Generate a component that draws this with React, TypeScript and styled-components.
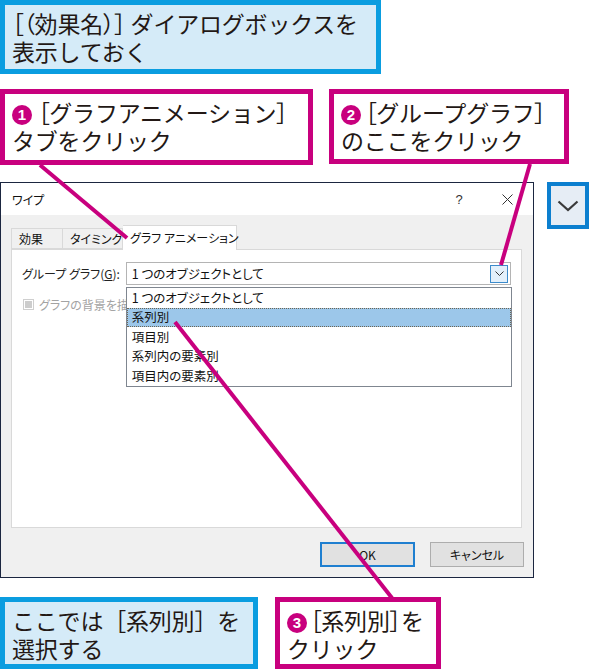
import React from "react";
import styled, { createGlobalStyle } from "styled-components";

const MAGENTA = "#c8007e";
const BLUE = "#0a9de0";

const GlobalStyle = createGlobalStyle`
  html, body {
    margin: 0;
    padding: 0;
    background: #fff;
  }
  body {
    font-family: "Noto Sans CJK JP", "Noto Sans", sans-serif;
    color: #231815;
  }
`;

const Page = styled.div`
  position: relative;
  width: 600px;
  height: 670px;
  overflow: hidden;
  display: flex;
  flex-direction: column;
`;

const Row = styled.div<{ $gap: number; $top: number }>`
  display: flex;
  align-items: flex-start;
  gap: ${(p) => p.$gap}px;
  margin-top: ${(p) => p.$top}px;
`;

const Note = styled.div<{ $w: number; $h: number }>`
  box-sizing: border-box;
  width: ${(p) => p.$w}px;
  height: ${(p) => p.$h}px;
  border: 5px solid ${BLUE};
  background: #d5ebf8;
  padding: 4px 0 0 7px;
  font-size: 23px;
  line-height: 28px;
  white-space: nowrap;
  letter-spacing: -0.2px;
`;

const Callout = styled(Note)`
  border-color: ${MAGENTA};
  background: #fff;
`;

// proportional brackets, as in the printed captions
const Bk = styled.span`
  font-feature-settings: "palt";
`;

const Num = styled.span<{ $gap?: number }>`
  display: inline-flex;
  align-items: center;
  justify-content: center;
  width: 20px;
  height: 20px;
  border-radius: 50%;
  background: ${MAGENTA};
  color: #fff;
  font-family: "Liberation Sans", Arial, sans-serif;
  font-size: 15px;
  font-weight: 700;
  letter-spacing: 0;
  vertical-align: 2px;
  margin-right: ${(p) => p.$gap ?? 6}px;
`;

/* dialog */
const Dialog = styled.div`
  position: relative;
  box-sizing: border-box;
  width: 534px;
  height: 396px;
  border: 1px solid #1b2640;
  background: #f0f0f0;
  display: flex;
  flex-direction: column;
  font-family: "Noto Sans CJK JP", sans-serif;
  font-size: 12px;
  color: #111;
  font-feature-settings: "palt";
`;

const TitleBar = styled.div`
  height: 32px;
  background: #fff;
  display: flex;
  align-items: center;
  padding: 0 2px 0 11px;
`;

const Title = styled.div`
  flex: 1;
`;

const TitleButton = styled.div`
  width: 48px;
  height: 32px;
  display: flex;
  align-items: center;
  justify-content: center;
  color: #333;
  font-family: "Liberation Sans", sans-serif;
  font-size: 13px;
`;

const Body = styled.div`
  padding: 10px 11px 0 10px;
`;

const TabStrip = styled.div`
  display: flex;
  align-items: flex-end;
  height: 24px;
`;

const Tab = styled.div<{ $w: number; $active?: boolean }>`
  box-sizing: border-box;
  width: ${(p) => p.$w}px;
  height: ${(p) => (p.$active ? 25 : 21)}px;
  padding: ${(p) => (p.$active ? "3px" : "1px")} 0 0 7px;
  background: ${(p) => (p.$active ? "#fff" : "#f0f0f0")};
  border: 1px solid #d9d9d9;
  border-bottom: ${(p) => (p.$active ? "none" : "1px solid #d9d9d9")};
  margin-bottom: ${(p) => (p.$active ? -1 : 0)}px;
  position: relative;
  z-index: ${(p) => (p.$active ? 2 : 0)};
  white-space: nowrap;
  & + & {
    border-left: none;
  }
`;

const Panel = styled.div`
  box-sizing: border-box;
  height: 279px;
  background: #fff;
  border: 1px solid #d9d9d9;
  padding: 12px 10px 0 10px;
`;

const FieldRow = styled.div`
  display: flex;
  align-items: center;
  height: 23px;
`;

const FieldLabel = styled.div`
  width: 104px;
  white-space: nowrap;
  color: #222;
  u {
    text-decoration: underline;
  }
`;

const ComboWrap = styled.div`
  position: relative;
  width: 386px;
  height: 23px;
`;

const Combo = styled.div`
  box-sizing: border-box;
  height: 23px;
  border: 1px solid #b4b4b4;
  display: flex;
  align-items: center;
  padding: 0 2px 0 5px;
  font-size: 12.5px;
`;

const ComboText = styled.div`
  flex: 1;
`;

const DropButton = styled.div`
  box-sizing: border-box;
  width: 18px;
  height: 18px;
  border: 1px solid #3c8bcb;
  background: #e3f0fb;
  display: flex;
  align-items: center;
  justify-content: center;
`;

const List = styled.div`
  position: absolute;
  top: 25px;
  left: 0;
  width: 386px;
  box-sizing: border-box;
  border: 1px solid #7f8690;
  background: #fff;
  z-index: 3;
  font-size: 12.5px;
`;

const Item = styled.div<{ $selected?: boolean }>`
  box-sizing: border-box;
  height: 19.6px;
  display: flex;
  align-items: center;
  line-height: 1;
  overflow: hidden;
  padding-left: 4px;
  background: ${(p) => (p.$selected ? "#9cc7ea" : "transparent")};
  border: 1px ${(p) => (p.$selected ? "dotted #6d6452" : "solid transparent")};
`;

const CheckRow = styled.div`
  display: flex;
  align-items: center;
  gap: 5px;
  margin: 11px 0 0 1px;
  color: #a3a3a3;
  white-space: nowrap;
`;

const Check = styled.div`
  box-sizing: border-box;
  width: 11px;
  height: 11px;
  border: 1px solid #cfcfcf;
  display: flex;
  align-items: center;
  justify-content: center;
  &::after {
    content: "";
    width: 7px;
    height: 7px;
    background: #cdcdcd;
  }
`;

// the open list lies over the rest of this label
const CheckText = styled.span`
  width: 87px;
  overflow: hidden;
`;

const Footer = styled.div`
  display: flex;
  justify-content: flex-end;
  gap: 15px;
  padding: 14px 9px 0 0;
`;

const Button = styled.div<{ $w: number; $default?: boolean }>`
  box-sizing: border-box;
  width: ${(p) => p.$w}px;
  height: 25px;
  display: flex;
  align-items: center;
  justify-content: center;
  background: #e1e1e1;
  border: ${(p) => (p.$default ? "2px solid #1f7fd0" : "1px solid #adadad")};
  color: #111;
`;

const IconBox = styled.div`
  box-sizing: border-box;
  width: 42px;
  height: 47px;
  border: 4px solid #0c7fcf;
  background: #e6edf5;
  display: flex;
  align-items: center;
  justify-content: center;
`;

const Lines = styled.svg`
  position: absolute;
  left: 0;
  top: 0;
  pointer-events: none;
  z-index: 10;
`;

const items = [
  "1 つのオブジェクトとして",
  "系列別",
  "項目別",
  "系列内の要素別",
  "項目内の要素別",
];

export default function App() {
  return (
    <Page>
      <GlobalStyle />
      <Row $gap={0} $top={0}>
        <Note $w={381} $h={74}>
          <Bk>［（</Bk>効果名<Bk>）］</Bk> ダイアログボックスを
          <br />
          表示しておく
        </Note>
      </Row>

      <Row $gap={16} $top={15}>
        <Callout $w={313} $h={76}>
          <Num>1</Num>
          <Bk>［</Bk>グラフアニメーション<Bk>］</Bk>
          <br />
          タブをクリック
        </Callout>
        <Callout $w={240} $h={75}>
          <Num $gap={4}>2</Num>
          <Bk>［</Bk>グループグラフ<Bk>］</Bk>
          <br />
          のここをクリック
        </Callout>
      </Row>

      <Row $gap={13} $top={17}>
        <Dialog>
          <TitleBar>
            <Title>ワイプ</Title>
            <TitleButton>?</TitleButton>
            <TitleButton>
              <svg width="11" height="11" viewBox="0 0 11 11">
                <path d="M0.5 0.5 L10.5 10.5 M10.5 0.5 L0.5 10.5" stroke="#333" strokeWidth="1" />
              </svg>
            </TitleButton>
          </TitleBar>
          <Body>
            <TabStrip>
              <Tab $w={52}>効果</Tab>
              <Tab $w={60}>タイミング</Tab>
              <Tab $w={114} $active>
                グラフ アニメーション
              </Tab>
            </TabStrip>
            <Panel>
              <FieldRow>
                <FieldLabel>
                  グループ グラフ(<u>G</u>):
                </FieldLabel>
                <ComboWrap>
                  <Combo>
                    <ComboText>1 つのオブジェクトとして</ComboText>
                    <DropButton>
                      <svg width="9" height="5" viewBox="0 0 9 5">
                        <path d="M0.5 0.5 L4.5 4.5 L8.5 0.5" fill="none" stroke="#333" strokeWidth="1" />
                      </svg>
                    </DropButton>
                  </Combo>
                  <List>
                    {items.map((t, i) => (
                      <Item key={t} $selected={i === 1}>
                        {t}
                      </Item>
                    ))}
                  </List>
                </ComboWrap>
              </FieldRow>
              <CheckRow>
                <Check />
                <CheckText>グラフの背景を描画しない</CheckText>
              </CheckRow>
            </Panel>
          </Body>
          <Footer>
            <Button $w={95} $default>
              OK
            </Button>
            <Button $w={94}>キャンセル</Button>
          </Footer>
        </Dialog>
        <IconBox>
          <svg width="22" height="12" viewBox="0 0 22 12">
            <path d="M1.5 1.5 L11 10 L20.5 1.5" fill="none" stroke="#3a3a3a" strokeWidth="2.2" />
          </svg>
        </IconBox>
      </Row>

      <Row $gap={17} $top={19}>
        <Note $w={258} $h={72}>
          ここでは［系列別］を
          <br />
          選択する
        </Note>
        <Callout $w={166} $h={72}>
          <Num $gap={3}>3</Num>
          <Bk>［</Bk>系列別<Bk>］</Bk>を
          <br />
          クリック
        </Callout>
      </Row>

      <Lines width="600" height="670" viewBox="0 0 600 670">
        <g stroke={MAGENTA} strokeWidth="4" fill="none">
          <line x1="40" y1="165" x2="127" y2="238" />
          <line x1="530" y1="164" x2="501" y2="265" />
          <line x1="392" y1="598" x2="175" y2="322" />
        </g>
      </Lines>
    </Page>
  );
}
